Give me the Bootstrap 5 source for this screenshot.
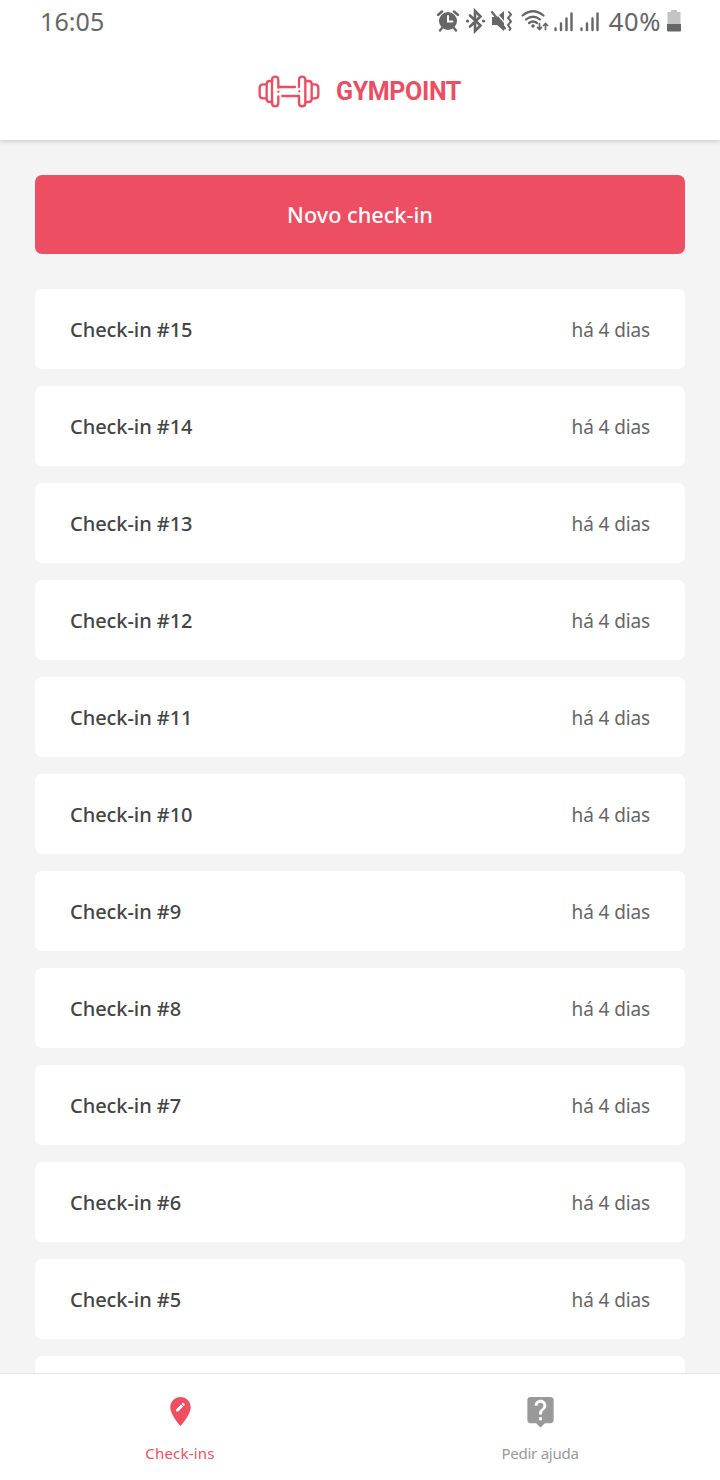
<!DOCTYPE html>
<html lang="pt-BR">
<head>
<meta charset="utf-8">
<meta name="viewport" content="width=device-width, initial-scale=1">
<title>Gympoint</title>
<link href="https://cdn.jsdelivr.net/npm/bootstrap@5.3.0/dist/css/bootstrap.min.css" rel="stylesheet">
<style>
  :root { --brand: #ee4e62; }
  body { font-family: "Noto Sans", sans-serif; background: #f4f4f4; }
  .app-head { height: 140px; box-shadow: 0 1px 5px rgba(0,0,0,.2); z-index: 1; }
  .status-bar { height: 44px; padding: 0 38px 0 40px; color: #666; font-size: 25px; line-height: 42px; }
  .clock { letter-spacing: .1px; }
  .battery-text { font-size: 25.5px; letter-spacing: .6px; line-height: 40px; padding-bottom: 2px; margin-left: 1px; }
  .brand-row { height: 94px; gap: 16px; color: #e94e62; padding-right: 1px; }
  .brand-name { font: 700 25px/1 Roboto, sans-serif; letter-spacing: -.35px; padding-top: 1px; }
  .checkins { padding: 35px 35px 0; min-height: 0; }
  .btn-new { height: 79px; background: var(--brand); color: #fff; border: 0; border-radius: 7px; font-size: 21.7px; font-weight: 500; padding-top: 8px; margin-bottom: 35px; }
  .btn-new:hover { background: #dc4055; color: #fff; }
  .checkin { height: 79.5px; margin-bottom: 17.5px; padding: 2px 35px 0; border-radius: 7px; }
  .checkin strong { font-size: 20px; font-weight: 500; color: #444; letter-spacing: -.05px; }
  .checkin span { font-size: 19px; color: #666; letter-spacing: -.12px; }
  .tabs { height: 107px; border-top: 1px solid #e6e6e6; }
  .tab { padding-top: 20px; font-size: 15px; line-height: 20px; color: #999; text-decoration: none; gap: 14px; letter-spacing: -.25px; }
  .tab.active { color: var(--brand); letter-spacing: .2px; }
</style>
</head>
<body class="vh-100 d-flex flex-column overflow-hidden">
<header class="app-head bg-white position-relative flex-shrink-0">
  <div class="status-bar d-flex justify-content-between">
    <span class="clock">16:05</span>
    <div class="d-flex align-items-center">
      <svg width="174" height="44" viewBox="434 0 174 44" fill="none" stroke="#666" stroke-width="2" stroke-linecap="round">
        <circle cx="448" cy="21" r="9" fill="#666" stroke="none"/>
        <path d="M438 15l4-3.500M458 15l-4-3.500M442 28l-2 2.500M454 28l2 2.500" stroke-width="2.400"/>
        <path d="M448 16v5.500h4.500" stroke="#fff"/>
        <path d="M470 15.500l10.500 10-5.500 5.500V11l5.500 5.500-10.500 10" stroke-width="2.600"/>
        <path d="M467.500 21h.1M483.500 21h.1" stroke-width="3.200"/>
        <path d="M492 17h5l7-6v20l-7-6h-5z" fill="#666" stroke="none"/>
        <path d="M494.500 11l10 11.500" stroke="#fff" stroke-width="1.500"/>
        <path d="M492 12l13 16.500" stroke-width="2.200"/>
        <path d="M509 12l2 2.500-3 3.500 3 3.500-3 3.500 2.500 3.500-1 1.500"/>
        <path d="M522.500 15.500q10.500-8.500 21 0M526 19.500q7-5.500 14 0M529 23q4-3 8 0" stroke-width="2.200"/>
        <circle cx="533" cy="26" r="1.800" fill="#666" stroke="none"/>
        <path d="M539.500 23.500v6M537.500 27.500l2 2 2-2M545.500 29.500v-6M543.500 25.500l2-2 2 2" stroke-width="1.700"/>
        <path d="M555.500 28.500v1.500M561 23.500v6.500M566.500 18.500v11.500M571.500 13.500v16.500M581.500 28.500v1.500M587 23.500v6.500M592.500 18.500v11.500M597.500 13.500v16.500" stroke-width="2.400"/>
      </svg>
      <span class="battery-text">40%</span>
      <svg width="16" height="44" viewBox="0 0 16 44" style="margin-left:5px"><path fill="#c4c4c4" d="M5 10h6v2h3.500V24h-13V12H5z"/><path fill="#666" d="M1 24h14v6.500a1 1 0 0 1-1 1H2a1 1 0 0 1-1-1z"/></svg>
    </div>
  </div>
  <div class="brand-row d-flex align-items-center justify-content-center">
    <svg width="62" height="33" viewBox="54 32 186 99" fill="none" stroke="currentColor" stroke-width="7" stroke-linecap="round">
      <path d="M78 60H70Q59 60 59 71V91Q59 102 70 102H78M97 50H89Q80 50 80 59V104Q80 113 89 113H97"/>
      <path d="M115 70V47Q115 37 105.500 37T96 47V116Q96 126 105.500 126T115 116V96M116 68H165M127 95H176"/>
      <path d="M177 68V47Q177 37 186.500 37T196 47V116Q196 126 186.500 126T177 116V95"/>
      <path d="M216 60H224Q235 60 235 71V91Q235 102 224 102H216M198 50H206Q215 50 215 59V104Q215 113 206 113H198"/>
      <path d="M115 82h.1M178 81h.1"/>
    </svg>
    <span class="brand-name">GYMPOINT</span>
  </div>
</header>
<main class="checkins flex-fill overflow-hidden">
  <button class="btn btn-new w-100 d-block" type="button">Novo check-in</button>
  <div class="checkin bg-white d-flex align-items-center justify-content-between"><strong>Check-in #15</strong><span>há 4 dias</span></div>
  <div class="checkin bg-white d-flex align-items-center justify-content-between"><strong>Check-in #14</strong><span>há 4 dias</span></div>
  <div class="checkin bg-white d-flex align-items-center justify-content-between"><strong>Check-in #13</strong><span>há 4 dias</span></div>
  <div class="checkin bg-white d-flex align-items-center justify-content-between"><strong>Check-in #12</strong><span>há 4 dias</span></div>
  <div class="checkin bg-white d-flex align-items-center justify-content-between"><strong>Check-in #11</strong><span>há 4 dias</span></div>
  <div class="checkin bg-white d-flex align-items-center justify-content-between"><strong>Check-in #10</strong><span>há 4 dias</span></div>
  <div class="checkin bg-white d-flex align-items-center justify-content-between"><strong>Check-in #9</strong><span>há 4 dias</span></div>
  <div class="checkin bg-white d-flex align-items-center justify-content-between"><strong>Check-in #8</strong><span>há 4 dias</span></div>
  <div class="checkin bg-white d-flex align-items-center justify-content-between"><strong>Check-in #7</strong><span>há 4 dias</span></div>
  <div class="checkin bg-white d-flex align-items-center justify-content-between"><strong>Check-in #6</strong><span>há 4 dias</span></div>
  <div class="checkin bg-white d-flex align-items-center justify-content-between"><strong>Check-in #5</strong><span>há 4 dias</span></div>
  <div class="checkin bg-white"></div>
</main>
<nav class="tabs bg-white d-flex flex-shrink-0">
  <a class="tab active w-50 d-flex flex-column align-items-center" href="#">
    <svg width="35" height="35" viewBox="0 0 24 24" fill="currentColor"><path d="M12 2C8.140 2 5 5.140 5 9c0 5.250 7 13 7 13s7-7.750 7-13c0-3.860-3.140-7-7-7zm-1.560 10H9v-1.440l3.350-3.340 1.430 1.430L10.440 12zm4.450-4.450l-.7.7-1.440-1.440.7-.7c.15-.15.39-.15.54 0l.9.9c.15.15.15.39 0 .54z"/></svg>
    <span>Check-ins</span>
  </a>
  <a class="tab w-50 d-flex flex-column align-items-center" href="#">
    <svg width="35" height="35" viewBox="0 0 24 24" fill="currentColor"><path d="M19 2H5c-1.110 0-2 .9-2 2v14c0 1.100.89 2 2 2h4l3 3 3-3h4c1.100 0 2-.9 2-2V4c0-1.100-.9-2-2-2zm-6 16h-2v-2h2v2zm2.070-7.750l-.9.920C13.450 11.900 13 12.500 13 14h-2v-.5c0-1.100.45-2.100 1.170-2.830l1.240-1.260c.37-.36.59-.86.59-1.410 0-1.100-.9-2-2-2s-2 .9-2 2H8c0-2.210 1.790-4 4-4s4 1.790 4 4c0 .88-.36 1.680-.93 2.250z"/></svg>
    <span>Pedir ajuda</span>
  </a>
</nav>
<script src="https://cdn.jsdelivr.net/npm/bootstrap@5.3.0/dist/js/bootstrap.bundle.min.js"></script>
</body>
</html>
